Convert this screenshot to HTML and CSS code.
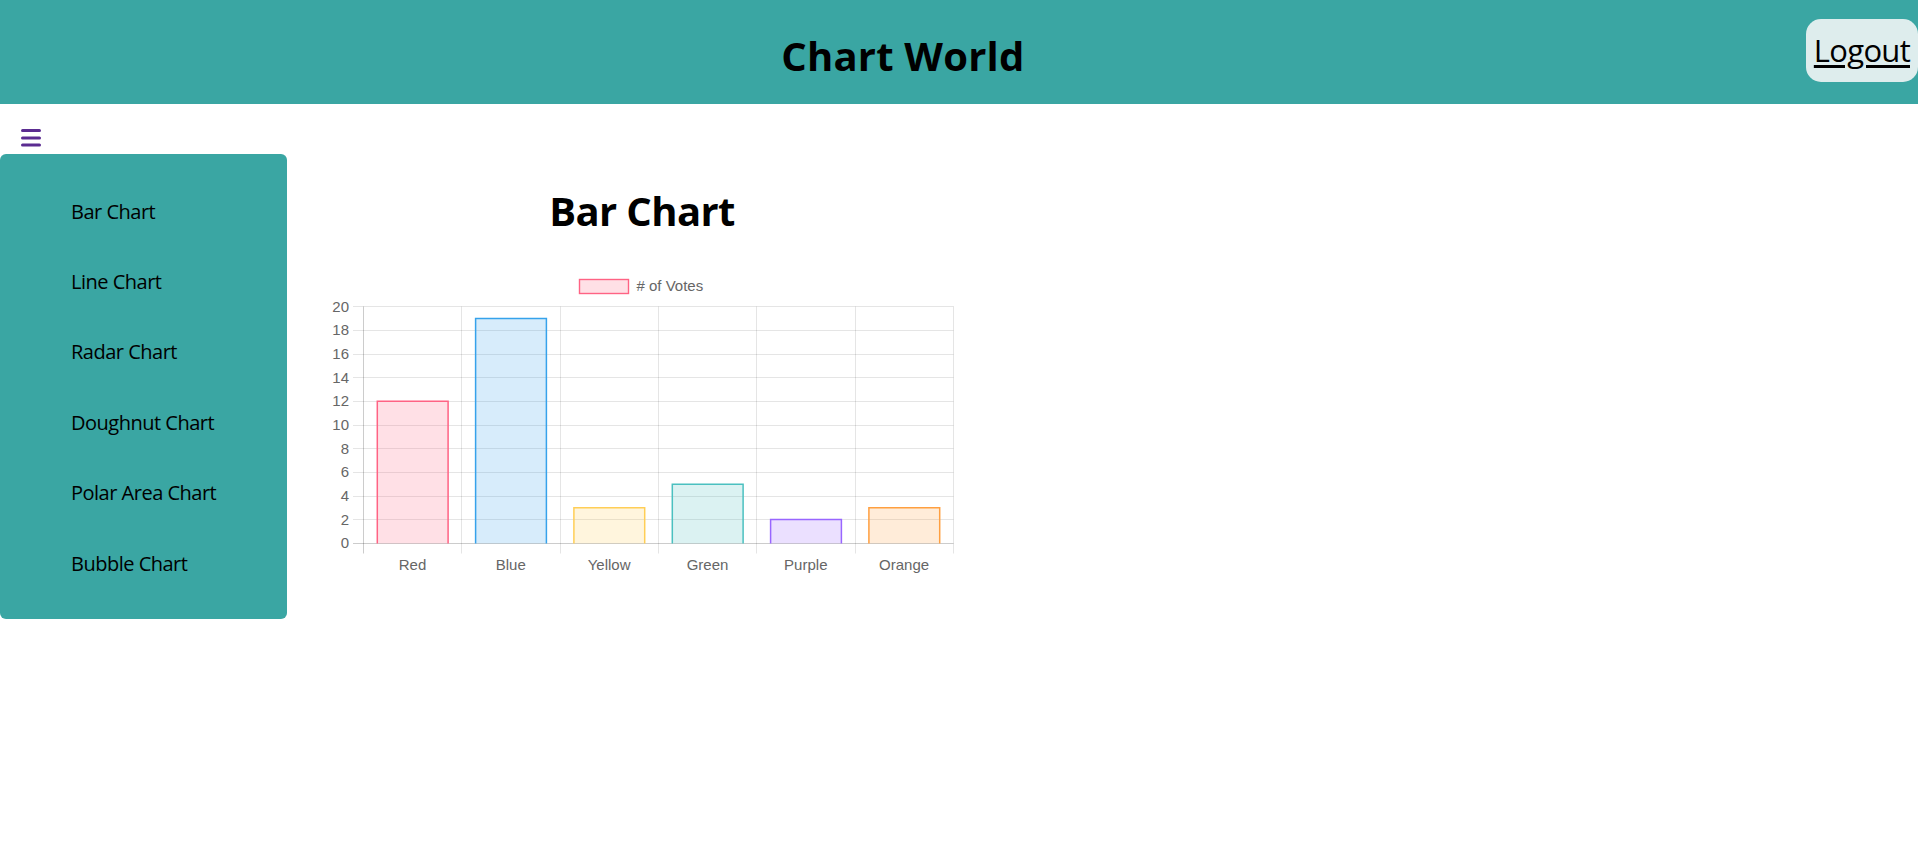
FILE: index.html
```html
<!DOCTYPE html>
<html lang="en">
<head>
<meta charset="utf-8">
<title>Chart World</title>
<link rel="stylesheet" href="styles.css">
</head>
<body>
<header class="topbar">
  <h1 class="brand">Chart World</h1>
  <a class="logout" href="#">Logout</a>
</header>
<div class="layout">
  <aside class="side">
    <div class="toggle">
      <svg class="burger" width="20" height="18" viewBox="0 0 20 18" aria-hidden="true">
        <rect x="0" y="0" width="20" height="3" rx="1.5"/>
        <rect x="0" y="7.5" width="20" height="3" rx="1.5"/>
        <rect x="0" y="14.5" width="20" height="3" rx="1.5"/>
      </svg>
    </div>
    <nav class="menu">
      <ul>
        <li>Bar Chart</li>
        <li>Line Chart</li>
        <li>Radar Chart</li>
        <li>Doughnut Chart</li>
        <li>Polar Area Chart</li>
        <li>Bubble Chart</li>
      </ul>
    </nav>
  </aside>
  <main class="main">
    <h2 class="page-title">Bar Chart</h2>
    <svg class="chart" width="640" height="310" viewBox="0 0 640 310">
      <g class="legend">
        <rect x="257.5" y="9.5" width="49" height="14" fill="rgba(255,99,132,0.2)" stroke="rgb(255,99,132)" stroke-width="1.4"/>
        <text x="314.5" y="21">&#35; of Votes</text>
      </g>
      <g class="grid" stroke="rgba(0,0,0,0.1)" stroke-width="1">
        <line x1="31" y1="36.5" x2="631.5" y2="36.5"/>
        <line x1="31" y1="60.5" x2="631.5" y2="60.5"/>
        <line x1="31" y1="84.5" x2="631.5" y2="84.5"/>
        <line x1="31" y1="107.5" x2="631.5" y2="107.5"/>
        <line x1="31" y1="131.5" x2="631.5" y2="131.5"/>
        <line x1="31" y1="155.5" x2="631.5" y2="155.5"/>
        <line x1="31" y1="178.5" x2="631.5" y2="178.5"/>
        <line x1="31" y1="202.5" x2="631.5" y2="202.5"/>
        <line x1="31" y1="226.5" x2="631.5" y2="226.5"/>
        <line x1="31" y1="249.5" x2="631.5" y2="249.5"/>
        <line x1="139.5" y1="36.5" x2="139.5" y2="283.5"/>
        <line x1="238.5" y1="36.5" x2="238.5" y2="283.5"/>
        <line x1="336.5" y1="36.5" x2="336.5" y2="283.5"/>
        <line x1="434.5" y1="36.5" x2="434.5" y2="283.5"/>
        <line x1="533.5" y1="36.5" x2="533.5" y2="283.5"/>
        <line x1="631.5" y1="36.5" x2="631.5" y2="283.5"/>
      </g>
      <g class="axis" stroke="rgba(0,0,0,0.2)" stroke-width="1">
        <line x1="41.5" y1="36.5" x2="41.5" y2="283.5"/>
        <line x1="31" y1="273.5" x2="631.5" y2="273.5"/>
      </g>
      <g class="bars" stroke-width="1.5">
        <rect x="55.3" y="131.3" width="70.8" height="142.2" fill="rgba(255,99,132,0.2)" stroke="none"/>
        <path d="M55.3 273.5V131.3H126.1V273.5" fill="none" stroke="rgb(255,99,132)"/>
        <rect x="153.6" y="48.5" width="70.8" height="225" fill="rgba(54,162,235,0.2)" stroke="none"/>
        <path d="M153.6 273.5V48.5H224.4V273.5" fill="none" stroke="rgb(54,162,235)"/>
        <rect x="251.9" y="237.8" width="70.8" height="35.7" fill="rgba(255,206,86,0.2)" stroke="none"/>
        <path d="M251.9 273.5V237.8H322.7V273.5" fill="none" stroke="rgb(255,206,86)"/>
        <rect x="350.3" y="214.2" width="70.8" height="59.3" fill="rgba(75,192,192,0.2)" stroke="none"/>
        <path d="M350.3 273.5V214.2H421.1V273.5" fill="none" stroke="rgb(75,192,192)"/>
        <rect x="448.6" y="249.6" width="70.8" height="23.9" fill="rgba(153,102,255,0.2)" stroke="none"/>
        <path d="M448.6 273.5V249.6H519.4V273.5" fill="none" stroke="rgb(153,102,255)"/>
        <rect x="546.9" y="237.8" width="70.8" height="35.7" fill="rgba(255,159,64,0.2)" stroke="none"/>
        <path d="M546.9 273.5V237.8H617.7V273.5" fill="none" stroke="rgb(255,159,64)"/>
      </g>
      <g class="ylabels" text-anchor="end">
        <text x="27" y="41.7">20</text>
        <text x="27" y="65.3">18</text>
        <text x="27" y="89">16</text>
        <text x="27" y="112.7">14</text>
        <text x="27" y="136.3">12</text>
        <text x="27" y="160">10</text>
        <text x="27" y="183.6">8</text>
        <text x="27" y="207.3">6</text>
        <text x="27" y="231">4</text>
        <text x="27" y="254.6">2</text>
        <text x="27" y="278.3">0</text>
      </g>
      <g class="xlabels" text-anchor="middle">
        <text x="90.5" y="300">Red</text>
        <text x="188.8" y="300">Blue</text>
        <text x="287.1" y="300">Yellow</text>
        <text x="385.5" y="300">Green</text>
        <text x="483.8" y="300">Purple</text>
        <text x="582.1" y="300">Orange</text>
      </g>
    </svg>
  </main>
</div>
</body>
</html>
```

FILE: styles.css
```css
* { box-sizing: border-box; }

html, body {
  margin: 0;
  padding: 0;
  background: #ffffff;
}

body {
  font-family: "Open Sans", "Noto Sans", "Liberation Sans", sans-serif;
  color: #000;
}

.topbar {
  display: flex;
  align-items: flex-start;
  height: 104px;
  background: #3aa6a3;
}

.brand {
  flex: 1;
  margin: 29px 0 0;
  text-align: center;
  font-size: 40px;
  font-weight: 700;
  line-height: 54px;
  letter-spacing: 0.2px;
}

.logout {
  display: flex;
  align-items: center;
  height: 63px;
  margin-top: 19px;
  padding: 0 8px 2px 8px;
  background: #deeded;
  border-radius: 15px;
  color: #000;
  font-size: 31px;
  line-height: 42px;
  text-decoration: underline;
  text-underline-offset: 3px;
  letter-spacing: -0.7px;
}

.layout {
  display: flex;
  align-items: flex-start;
}

.side {
  width: 287px;
  flex: none;
}

.toggle {
  height: 50px;
  padding: 25px 0 0 21px;
}

.burger {
  display: block;
  fill: #5b2c91;
}

.menu {
  background: #3aa6a3;
  border-radius: 6px;
  padding: 22px 0 21px;
}

.menu ul {
  list-style: none;
  margin: 0;
  padding: 0;
}

.menu li {
  display: flex;
  align-items: center;
  height: 70.4px;
  padding-left: 71px;
  font-size: 20px;
  letter-spacing: -0.5px;
}

.main {
  width: 640px;
  margin-left: 35px;
}

.page-title {
  margin: 80px 0 0;
  height: 86px;
  line-height: 54px;
  text-align: center;
  font-size: 40px;
  font-weight: 700;
  letter-spacing: -0.6px;
}

.chart {
  display: block;
}

.chart text {
  font-family: "Liberation Sans", Arial, sans-serif;
  font-size: 15px;
  fill: #666666;
}
```
